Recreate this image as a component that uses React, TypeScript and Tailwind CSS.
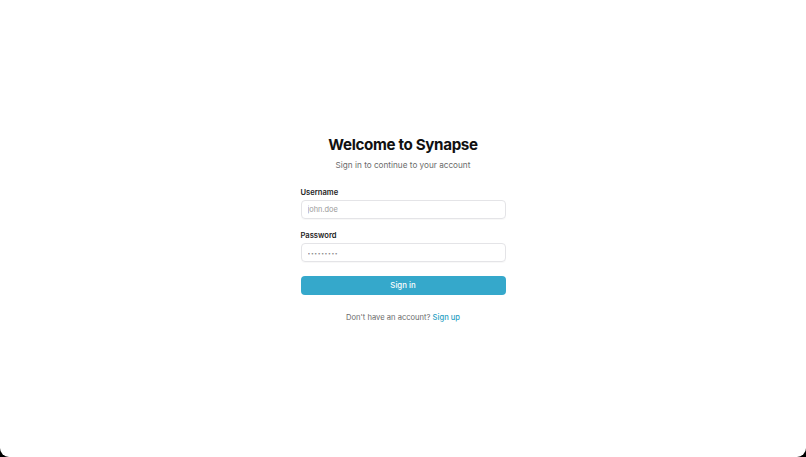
export default function App() {
  return (
    <div className="w-[806px] h-[457px] bg-black">
      <div
        className="w-full h-full bg-white rounded-b-[9px] flex flex-col items-center"
        style={{ fontFamily: "Inter, 'Noto Sans', sans-serif" }}
      >
        <div className="w-[205px] mt-[135px] flex flex-col">
          {/* Heading */}
          <h1 className="text-center text-[15.2px] leading-[20px] font-bold tracking-[-0.35px] text-[#111]">
            Welcome to Synapse
          </h1>
          <p className="text-center text-[8.2px] leading-[12px] mt-[4px] text-[#6b6b6b]">
            Sign in to continue to your account
          </p>

          {/* Form */}
          <form className="mt-[17px] flex flex-col" onSubmit={(e) => e.preventDefault()}>
            <label className="text-[7.6px] leading-[10px] font-semibold text-[#222]">Username</label>
            <input
              className="mt-[2px] h-[19px] w-full rounded-[4px] border border-[#e4e4e7] px-[6px] text-[7.4px] text-[#222] placeholder:text-[#9a9a9a] outline-none shadow-[0_1px_1px_rgba(0,0,0,0.03)]"
              placeholder="john.doe"
            />

            <label className="mt-[12px] text-[7.6px] leading-[10px] font-semibold text-[#222]">Password</label>
            <input
              type="password"
              className="mt-[2px] h-[19px] w-full rounded-[4px] border border-[#e4e4e7] px-[6px] text-[7.4px] tracking-[0.6px] text-[#222] placeholder:text-[#8a8a8a] placeholder:text-[5px] outline-none shadow-[0_1px_1px_rgba(0,0,0,0.03)]"
              placeholder="•••••••••"
            />

            <button
              type="submit"
              className="mt-[14px] h-[19px] w-full rounded-[4px] bg-[#35a8cb] text-white text-[7.8px] font-medium"
            >
              Sign in
            </button>
          </form>

          <p className="mt-[18px] text-center text-[7.6px] leading-[10px] text-[#6b6b6b]">
            Don't have an account? <a className="text-[#2a9fc4] font-medium">Sign up</a>
          </p>
        </div>
      </div>
    </div>
  );
}
